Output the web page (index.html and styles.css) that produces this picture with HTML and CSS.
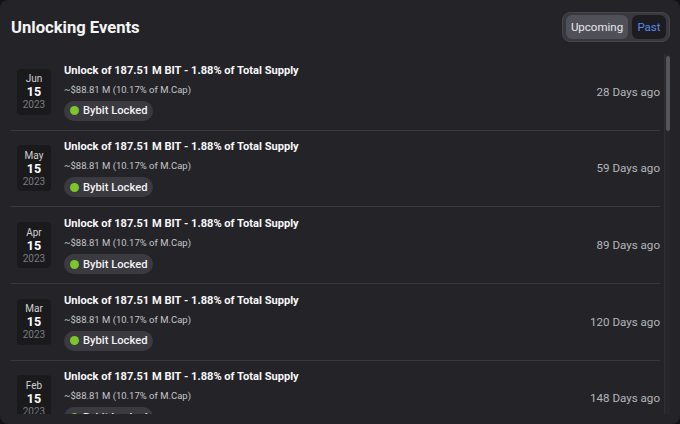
FILE: index.html
```html
<!DOCTYPE html>
<html>
<head>
<meta charset="utf-8">
<link rel="stylesheet" href="styles.css">
</head>
<body>
<div class="panel">
  <div class="header">
    <h1 class="title">Unlocking Events</h1>
    <div class="toggle">
      <span class="seg seg-active">Upcoming</span>
      <span class="seg seg-past">Past</span>
    </div>
  </div>
  <div class="list-wrap">
    <div class="list">
      <div class="row">
        <div class="date"><span class="mon">Jun</span><span class="day">15</span><span class="yr">2023</span></div>
        <div class="info">
          <div class="ev-title">Unlock of 187.51 M BIT - 1.88% of Total Supply</div>
          <div class="ev-sub">~$88.81 M (10.17% of M.Cap)</div>
          <div class="badge"><span class="dot"></span>Bybit Locked</div>
        </div>
        <div class="ago">28 Days ago</div>
      </div>
      <div class="row">
        <div class="date"><span class="mon">May</span><span class="day">15</span><span class="yr">2023</span></div>
        <div class="info">
          <div class="ev-title">Unlock of 187.51 M BIT - 1.88% of Total Supply</div>
          <div class="ev-sub">~$88.81 M (10.17% of M.Cap)</div>
          <div class="badge"><span class="dot"></span>Bybit Locked</div>
        </div>
        <div class="ago">59 Days ago</div>
      </div>
      <div class="row">
        <div class="date"><span class="mon">Apr</span><span class="day">15</span><span class="yr">2023</span></div>
        <div class="info">
          <div class="ev-title">Unlock of 187.51 M BIT - 1.88% of Total Supply</div>
          <div class="ev-sub">~$88.81 M (10.17% of M.Cap)</div>
          <div class="badge"><span class="dot"></span>Bybit Locked</div>
        </div>
        <div class="ago">89 Days ago</div>
      </div>
      <div class="row">
        <div class="date"><span class="mon">Mar</span><span class="day">15</span><span class="yr">2023</span></div>
        <div class="info">
          <div class="ev-title">Unlock of 187.51 M BIT - 1.88% of Total Supply</div>
          <div class="ev-sub">~$88.81 M (10.17% of M.Cap)</div>
          <div class="badge"><span class="dot"></span>Bybit Locked</div>
        </div>
        <div class="ago">120 Days ago</div>
      </div>
      <div class="row">
        <div class="date"><span class="mon">Feb</span><span class="day">15</span><span class="yr">2023</span></div>
        <div class="info">
          <div class="ev-title">Unlock of 187.51 M BIT - 1.88% of Total Supply</div>
          <div class="ev-sub">~$88.81 M (10.17% of M.Cap)</div>
          <div class="badge"><span class="dot"></span>Bybit Locked</div>
        </div>
        <div class="ago">148 Days ago</div>
      </div>
    </div>
    <div class="scrollbar"><div class="thumb"></div></div>
  </div>
</div>
</body>
</html>
```
FILE: styles.css
```css
* { box-sizing: border-box; }
html, body { margin: 0; padding: 0; background: #141416; }
body { width: 680px; height: 424px; overflow: hidden; font-family: Roboto, "Noto Sans", sans-serif; }
.panel {
  width: 680px; height: 424px;
  background: #242428;
  border-radius: 8px;
  padding: 12px 10px 10px 10px;
  display: flex; flex-direction: column;
}
.header { display: flex; justify-content: space-between; align-items: center; height: 30px; flex: none; }
.title { margin: 0; padding-left: 1px; font-size: 16.6px; font-weight: 700; color: #f4f4f6; }
.toggle {
  display: flex; gap: 4px; align-items: center;
  height: 30px; padding: 3px;
  background: #38383e; border: 1px solid #45454c; border-radius: 8px;
}
.seg { height: 24px; display: flex; align-items: center; border-radius: 6px; font-size: 11.5px; justify-content: center; }
.seg-active { background: #505058; color: #e8e8ec; width: 62px; }
.seg-past { background: #1d1d21; color: #5b8ae6; width: 34px; }
.list-wrap { position: relative; flex: 1; margin-top: 12px; overflow: hidden; }
.list { display: flex; flex-direction: column; padding-right: 10px; }
.row {
  height: 76.67px; flex: none;
  display: flex; align-items: center;
  padding-left: 7px;
  border-bottom: 1px solid #38383e;
}
.date {
  width: 34px; height: 46px; flex: none;
  background: #1a1a1d; border-radius: 4px;
  display: flex; flex-direction: column; align-items: center; justify-content: center;
  line-height: 13px;
}
.mon { font-size: 10px; color: #d0d0d4; }
.day { font-size: 12.5px; font-weight: 700; color: #ffffff; }
.yr { font-size: 10px; color: #7a7a80; }
.info { flex: 1; margin-left: 13px; display: flex; flex-direction: column; align-items: flex-start; }
.ev-title { font-size: 11.1px; font-weight: 700; color: #f8f8fa; line-height: 16px; }
.ev-sub { font-size: 9.5px; color: #c4c4c8; line-height: 14px; margin-top: 4px; }
.badge {
  margin-top: 4px; height: 20px; padding: 0 6px 0 6px;
  display: flex; align-items: center; gap: 4px;
  background: #3a3a40; border-radius: 10px;
  font-size: 11.2px; font-weight: 500; color: #f2f2f4;
}
.dot { width: 9px; height: 9px; border-radius: 50%; background: #7cc52a; }
.ago { font-size: 11.6px; color: #b4b4ba; }
.scrollbar {
  position: absolute; right: -2px; top: 0; bottom: 0; width: 8px;
  border-left: 1px solid #303036; border-right: 1px solid #303036;
  background: #27272b;
}
.thumb { margin: 2px 1px 0 1px; height: 75px; background: #55555c; border-radius: 2px; }
```
